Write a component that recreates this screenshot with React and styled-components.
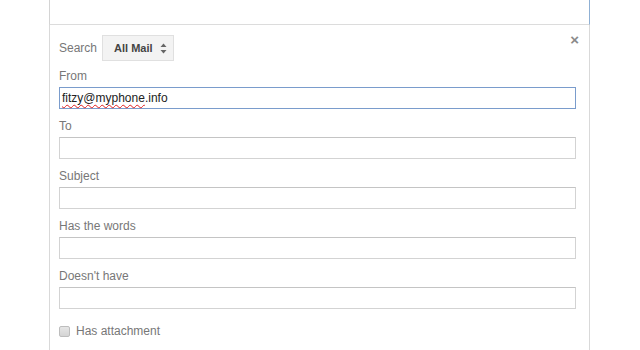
import React from "react";
import styled, { createGlobalStyle } from "styled-components";

const Global = createGlobalStyle`
  html, body { margin: 0; padding: 0; background: #fff; }
  body { font-family: "Liberation Sans", Arial, sans-serif; }
`;

const Page = styled.div`
  width: 541px;
  margin-left: 49px;
  height: 350px;
  display: flex;
  flex-direction: column;
  overflow: hidden;
`;

const SearchBar = styled.div`
  height: 24px;
  flex: none;
  background: #fff;
  border-left: 1px solid #d4d4d4;
  border-right: 1px solid #8fb0d4;
  border-bottom: 1px solid #dcdcdc;
`;

const Panel = styled.div`
  position: relative;
  flex: 1;
  background: #fff;
  border-left: 1px solid #d9d9d9;
  border-right: 1px solid #d9d9d9;
  padding: 10px 13px 0 9px;
  display: flex;
  flex-direction: column;
`;

const Close = styled.span`
  position: absolute;
  top: 8px;
  right: 10px;
  font-size: 15px;
  font-weight: bold;
  color: #8a8a8a;
  line-height: 14px;
`;

const SearchRow = styled.div`
  display: flex;
  align-items: center;
  gap: 5px;
  height: 26px;
  margin-bottom: 7px;
`;

const Label = styled.div`
  font-size: 12px;
  line-height: 16px;
  color: #777;
`;

const Select = styled.div`
  box-sizing: border-box;
  width: 72px;
  height: 26px;
  background: #f3f3f3;
  border: 1px solid #e0e0e0;
  display: flex;
  align-items: center;
  justify-content: space-between;
  padding: 0 6px 0 11px;
  font-size: 11px;
  font-weight: bold;
  color: #444;
`;

const Fields = styled.div`
  display: flex;
  flex-direction: column;
  gap: 9px;
`;

const Field = styled.div`
  display: flex;
  flex-direction: column;
  gap: 3px;
`;

const Input = styled.div`
  box-sizing: border-box;
  height: 22px;
  border: 1px solid ${(p) => (p.$focused ? "#7a9ccc" : "#d3d3d3")};
  border-top-color: ${(p) => (p.$focused ? "#7a9ccc" : "#c4c4c4")};
  background: #fff;
  font-size: 12px;
  color: #222;
  line-height: 20px;
  padding-left: 2px;
  white-space: nowrap;
`;

const Misspelled = styled.span`
  text-decoration-line: underline;
  text-decoration-style: wavy;
  text-decoration-color: #e02020;
  text-decoration-thickness: 1px;
  text-underline-offset: 2px;
`;

const CheckRow = styled.label`
  display: flex;
  align-items: center;
  gap: 6px;
  margin-top: 15px;
  font-size: 12px;
  color: #777;
`;

const Box = styled.span`
  box-sizing: border-box;
  width: 11px;
  height: 11px;
  border: 1px solid #bdbdbd;
  border-radius: 2px;
  background: linear-gradient(#e6e6e6, #d4d4d4);
`;

const Arrows = () => (
  <svg width="7" height="11" viewBox="0 0 7 11">
    <path d="M3.5 0.5 L6.5 4 L0.5 4 Z" fill="#666" />
    <path d="M3.5 10.5 L6.5 7 L0.5 7 Z" fill="#666" />
  </svg>
);

const fields = ["To", "Subject", "Has the words", "Doesn't have"];

export default function App() {
  return (
    <>
      <Global />
      <Page>
        <SearchBar />
        <Panel>
          <Close>×</Close>
          <SearchRow>
            <Label>Search</Label>
            <Select>
              All Mail
              <Arrows />
            </Select>
          </SearchRow>
          <Fields>
            <Field>
              <Label>From</Label>
              <Input $focused>
                <Misspelled>fitzy@myphone</Misspelled>.info
              </Input>
            </Field>
            {fields.map((f) => (
              <Field key={f}>
                <Label>{f}</Label>
                <Input />
              </Field>
            ))}
          </Fields>
          <CheckRow>
            <Box />
            Has attachment
          </CheckRow>
        </Panel>
      </Page>
    </>
  );
}
